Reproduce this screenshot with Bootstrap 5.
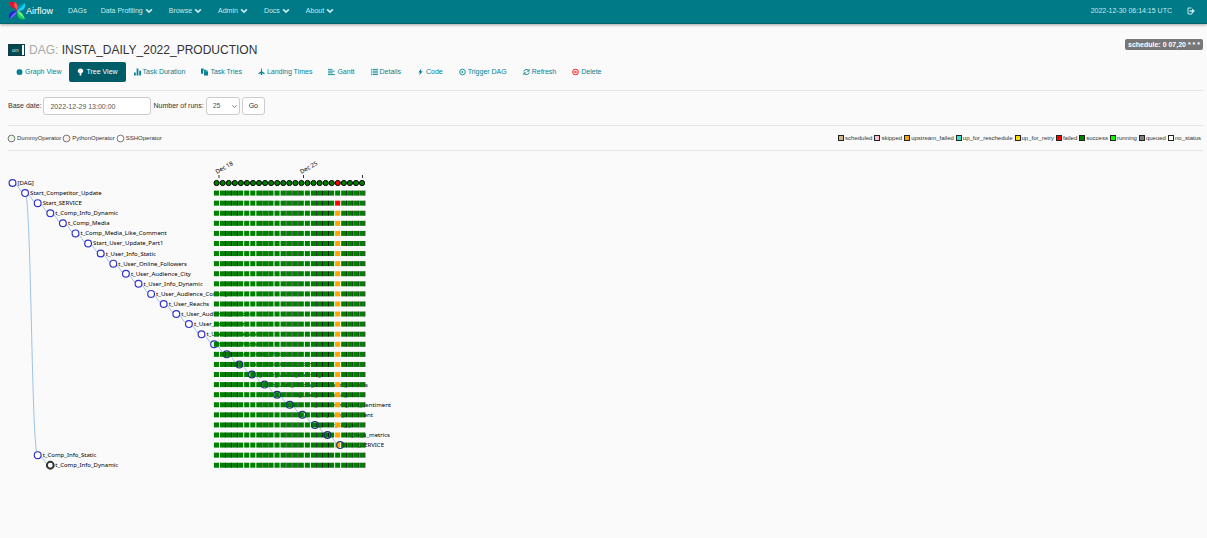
<!DOCTYPE html>
<html lang="en">
<head>
<meta charset="utf-8">
<meta name="viewport" content="width=device-width, initial-scale=1">
<title>Airflow - INSTA_DAILY_2022_PRODUCTION</title>
<link href="https://cdn.jsdelivr.net/npm/bootstrap@5.3.0/dist/css/bootstrap.min.css" rel="stylesheet">
<style>
body{background:#fafafa;color:#333;font:7px/10px "Liberation Sans",Arial,sans-serif}
.topbar{background:#017a87;height:24px;border-bottom:1px solid #00606b;box-shadow:0 1px 3px rgba(0,0,0,.35);padding:0 8px 2px}
.topbar a{color:#c5eaee;text-decoration:none}
.topbar .brand-link{color:#fff;font-size:9px;margin-right:15px}
.menu-links{gap:14px}
.chev{width:8px;height:8px;margin:0 2px;stroke:currentColor;fill:none;stroke-width:3}
.clock{color:#c5eaee;margin-right:15px}
main{padding:13px 4px 0 8px}
h1{font-size:12px;line-height:18px;margin:0;gap:4px}
.dag-word{color:#aaa}
.switch-box{width:17px;height:12px;appearance:none;margin:0;background:linear-gradient(90deg,#014a53 13px,#fff 13px);border:1px solid #123c42}
.switch-wrap{line-height:12px;height:12px}
.switch-wrap span{position:absolute;left:4px;top:0;font-size:6px;color:#d5eef0;pointer-events:none}
.sched{background:#777;color:#fff;font-weight:700;border-radius:2px;padding:0 3px;height:11px;line-height:11px;margin-top:2px}
.tabs{margin-top:3px}
.tabs .nav-link{font-size:7px;line-height:10px;padding:5px 8px 5px 8px;color:#018393;border-radius:2px;display:flex;align-items:center;gap:2px}
.tabs .nav-link.active{background:#005c66;color:#fff}
.ic{width:7px;height:8px;fill:currentColor;flex:none}
.ic-line{fill:none;stroke:currentColor;stroke-width:2}
hr{margin:0;border-color:#ccc;opacity:.45}
.run-form{gap:2px;padding:6px 0 10px}
.run-form .form-control,.run-form .form-select,.run-form .btn{font-size:7px;line-height:10px;height:18px;border:1px solid #ccc;border-radius:3px;padding:3px 6px;color:#555;background-color:#fff}
.run-form .form-control{width:108px}
.run-form .form-select{width:34px;background-position:right 2px center;background-size:5px 5px}
.run-form .btn{color:#333}
.legend-row{height:24px;font-size:6px;line-height:8px}
.ops{gap:2px}
.states{gap:2px;margin-right:2px}
.ops svg{width:7px;height:7px;margin-right:2px;overflow:visible}
.swatch{width:6px;height:6px;border:1px solid #222;margin-right:1px}
.tree{display:block;font:6px "Noto Sans","DejaVu Sans",sans-serif;fill:#000}
.tree .link{fill:none;stroke:#9dc3e6;stroke-width:1}
.tree .node{fill:#fff;stroke:#3434c8;stroke-width:1.2}
</style>
</head>
<body>
<nav class="topbar d-flex align-items-center">
  <a class="brand-link d-flex align-items-center" href="#">
    <svg width="18" height="19" viewBox="0 0 18 19" aria-hidden="true"><path fill="#e8132b" d="M1 1Q10 -1 10 8L9 10Q7 7 3 6Z"/><path fill="#ff5a50" d="M7 1Q11 4 9 9L6 5Z"/><path fill="#18d5ee" d="M17 2Q18 11 9 10Q11 8 11 5Z"/><path fill="#0099c9" d="M17 2Q12 3 9 9L13 7Z"/><path fill="#14cf58" d="M17 18Q9 20 9 10Q11 12 14 12Z"/><path fill="#75ec86" d="M9 10Q13 9 17 18L12 14Z"/><path fill="#2422ce" d="M1 18Q0 9 9 10Q7 12 6 15Z"/><path fill="#7562ff" d="M1 18Q7 16 9 10L5 13Z"/></svg>Airflow</a>
  <div class="menu-links d-flex" id="menu"></div>
  <span class="clock ms-auto">2022-12-30 06:14:15 UTC</span>
  <a href="#" aria-label="Log out" class="d-flex me-1"><svg width="8" height="8" viewBox="0 0 16 16" fill="none" stroke="currentColor" stroke-width="2"><path d="M9 2H2V14H10V11"/><path d="M5 8H11" stroke-width="3"/><path d="M10 3L16 8L10 13Z" fill="currentColor" stroke="none"/></svg></a>
</nav>
<main>
  <div class="d-flex justify-content-between align-items-start">
    <h1 class="d-flex align-items-center fw-normal pt-1">
      <label class="switch-wrap position-relative d-flex"><input class="switch-box" type="checkbox" checked aria-label="DAG on"><span>on</span></label>
      <span><span class="dag-word">DAG:</span> INSTA_DAILY_2022_PRODUCTION</span>
    </h1>
    <span class="sched">schedule: 0 07,20 * * *</span>
  </div>
  <ul class="nav nav-pills tabs" id="tabs"></ul>
  <hr class="mt-2">
  <form class="run-form d-flex align-items-center" onsubmit="return false">
    <label for="base">Base date:</label><input id="base" class="form-control" type="text" value="2022-12-29 13:00:00">
    <label for="runs">Number of runs:</label><select id="runs" class="form-select"><option>5</option><option selected>25</option><option>50</option></select>
    <button class="btn" type="submit">Go</button>
  </form>
  <hr>
  <div class="legend-row d-flex justify-content-between align-items-center">
    <div class="ops d-flex" id="ops"></div>
    <div class="states d-flex" id="states"></div>
  </div>
  <hr>
  <svg class="tree" id="tree" width="386" height="330" role="img" aria-label="DAG runs tree"></svg>
</main>
<script src="https://cdn.jsdelivr.net/npm/bootstrap@5.3.0/dist/js/bootstrap.bundle.min.js"></script>
<script>
const put = (id, html) => document.getElementById(id).innerHTML = html;
const chev = '<svg class="chev" viewBox="0 0 14 14"><path d="M2 4L7 9L12 4"/></svg>';
put('menu', ['DAGs','Data Profiling','Browse','Admin','Docs','About'].map((t,i) =>
  `<a href="#" class="d-flex align-items-center">${t}${i ? chev : ''}</a>`).join(''));

const icon = (body, line) => `<svg class="ic ${line ? 'ic-line' : ''}" viewBox="0 0 16 16" aria-hidden="true">${body}</svg>`;
const tabs = [
  ['Graph View', icon('<path d="M8 1L10 2L13 2L14 5L15 8L14 11L13 14L10 14L8 15L6 14L3 14L2 11L1 8L2 5L3 2L6 2Z"/>')],
  ['Tree View', icon('<path d="M8 0C16 0 16 10 10 10L10 16H6V10C0 10 0 0 8 0"/>')],
  ['Task Duration', icon('<path d="M0 9H4V16H0ZM6 0H10V16H6ZM12 5H16V16H12Z"/>')],
  ['Task Tries', icon('<path d="M0 0H6V5H5V12H0ZM7 3H11V7H16V16H7ZM12 2L16 6H12Z"/>')],
  ['Landing Times', icon('<path d="M7 0H9V6L15 11V13L9 11V13L11 15H5L7 13V11L1 13V11L7 6Z"/>')],
  ['Gantt', icon('<path d="M0 2H10M0 6H15M0 10H11M0 14H16"/>', 1)],
  ['Details', icon('<path d="M0 2H3M4 2H16M0 6H3M4 6H16M0 10H3M4 10H16M0 14H3M4 14H16"/>', 1)],
  ['Code', icon('<path d="M10 0L3 9H7L5 16L13 6H9Z"/>')],
  ['Trigger DAG', icon('<circle cx="8" cy="8" r="6.5"/><path d="M6 5V11L11 8Z" fill="currentColor" stroke="none"/>', 1)],
  ['Refresh', icon('<path d="M2 7A6 6 0 0 1 13 5M14 1V6H9M14 9A6 6 0 0 1 3 11M2 15V10H7"/>', 1)],
  ['Delete', icon('<g stroke="#f00"><circle cx="8" cy="8" r="6.5"/><path d="M5 5L11 11M11 5L5 11"/></g>', 1)]];
put('tabs', tabs.map(([t,i], n) => `<li class="nav-item"><a class="nav-link${n === 1 ? ' active' : ''}" href="#">${i}${t}</a></li>`).join(''));

put('ops', [['DummyOperator','#e8f7e4'],['PythonOperator','#ffefeb'],['SSHOperator','#fff']].map(([t,c]) =>
  `<span class="d-flex align-items-center"><svg viewBox="0 0 7 7"><circle cx="3.5" cy="3.5" r="3.4" fill="${c}" stroke="#555" stroke-width=".8"/></svg>${t}</span>`).join(''));
put('states', [['scheduled','tan'],['skipped','pink'],['upstream_failed','orange'],['up_for_reschedule','turquoise'],['up_for_retry','gold'],['failed','red'],['success','green'],['running','lime'],['queued','gray'],['no_status','white']].map(([t,c]) =>
  `<span class="d-flex align-items-center"><span class="swatch" style="background:${c}"></span>${t}</span>`).join(''));

const names = ['[DAG]','Start_Competitor_Update','Start_SERVICE','t_Comp_Info_Dynamic','t_Comp_Media','t_Comp_Media_Like_Comment','Start_User_Update_Part1','t_User_Info_Static','t_User_Online_Followers','t_User_Audience_City','t_User_Info_Dynamic','t_User_Audience_Country','t_User_Reachs','t_User_Audience_Gender','t_User_Impressions','t_User_Profile_View','t_User_Media','t_User_Story_Metrics','t_User_Media_Like_Comment','t_User_Media_Hashtags','t_User_Media_Comments_Metrics','t_User_Mentions_Info','t_Comment_Text_Sentiment','t_Caption_Sentiment','t_User_Tagged','t_Tags_metrics','End_SERVICE','t_Comp_Info_Static','t_Comp_Info_Dynamic'];
const stepX = 12.6, stepY = 10.08, run = 6.06;
const nodes = names.map((name, i) => ({ name, x: 4.5 + stepX * (i < 27 ? i : i - 25), y: 32 + stepY * i, parent: i === 27 ? 1 : i - 1 }));
const links = nodes.slice(1).map(n => { const p = nodes[n.parent], m = (p.x + n.x) / 2;
  return `<path class="link" d="M${p.x} ${p.y}C${m} ${p.y} ${m} ${n.y} ${n.x} ${n.y}"/>`; }).join('');
const circles = nodes.map((n, i) => `<circle class="node" cx="${n.x}" cy="${n.y}" r="3.4"${i === 28 ? ' style="stroke:#333;stroke-width:2"' : i > 16 && i < 27 ? ' style="fill:none;stroke:#123c70"' : ''}/>`);
const labels = nodes.map((n, i) => i > 19 && i < 27
  ? `<text x="${[360,350,383,365,350,382,376][i-20]}" y="${n.y + 2}" text-anchor="end">${n.name}</text>`
  : `<text x="${n.x + 5}" y="${n.y + 2}">${n.name}</text>`).join('');
const lightGaps = [0,4,5,6,9,10,14,15,19,20];
let cells = '';
nodes.forEach((n, r) => {
  for (let c = 0; c < 25; c++) {
    const x = 208.6 + run * c, bad = c === 20;
    if (r === 0) { cells += `<circle cx="${x}" cy="${n.y}" r="2.6" fill="${bad ? 'red' : 'green'}" stroke="#000"/>`; continue; }
    if (!lightGaps.includes(c)) cells += `<rect x="${x + 2.2}" y="${n.y - 2.5}" width="1.1" height="5" fill="#111"/>`;
    const fill = bad && r === 2 ? 'red' : bad && r > 2 && r < 27 ? 'orange' : 'green';
    cells += `<rect x="${x - 2.7}" y="${n.y - 2.5}" width="5.1" height="5" fill="${fill}"/>`;
  }
});
const ticks = [[211,'Dec 18'],[295.5,'Dec 25'],[354.5,'']].map(([x,t]) =>
  `<path d="M${x} 24V27" stroke="#333"/><text transform="translate(${x - 2} 23) rotate(-30)">${t}</text>`).join('');
put('tree', links + circles.slice(0,17).join('') + circles.slice(27).join('') + labels + cells + circles.slice(17,27).join('') + ticks);
</script>
</body>
</html>
